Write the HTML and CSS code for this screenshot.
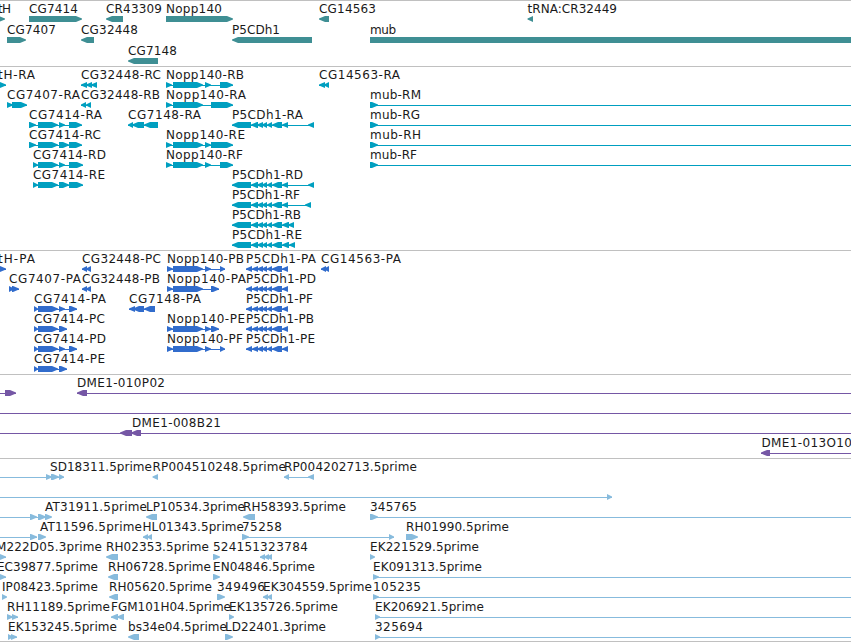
FILE: index.html
```html
<!DOCTYPE html>
<html lang="en">
<head>
  <meta charset="UTF-8" />
  <title>Genome Browser</title>
  <link rel="stylesheet" href="styles.css">
</head>
<body>
  <main class="tracks">
    <svg class="track genes" id="genes" height="65"></svg>
    <svg class="track transcripts" id="transcripts" height="183"></svg>
    <svg class="track proteins" id="proteins" height="123"></svg>
    <svg class="track bacs" id="bacs" height="83"></svg>
    <svg class="track ests" id="ests" height="182"></svg>
  </main>
  <script src="tracks.js"></script>
</body>
</html>
```
FILE: styles.css
```css
body {
  margin: 0;
  background-color: #fff;
  font-family: "DejaVu Sans", sans-serif;
  font-size: 12px;
  overflow: hidden;
}
.tracks {
  display: flex;
  flex-direction: column;
  border-bottom: 1px solid #c0c0c0;
}
.track {
  display: block;
  width: 100%;
  border-top: 1px solid #c0c0c0;
  overflow: hidden;
}
.track text {
  fill: #1a1a1a;
}
.track rect {
  shape-rendering: crispEdges;
}
.genes {
  fill: #3f8f94;
}
.transcripts {
  fill: #009fc0;
}
.proteins {
  fill: #316ccc;
}
.bacs {
  fill: #7557a5;
}
.ests {
  fill: #87bbdd;
}
```
FILE: tracks.js
```js
const END = 860;

// each item: [row, label, label start, label end, strand, exons, line end]
const nopp = [[166, 172], [173, 203]];
const noppP = [[167, 173], [173, 203]];
const p5 = [[232, 251], [251, 258], [257, 263], [262, 267], [267, 272], [272, 282]];
const p5P = [[246, 252], [252, 258], [257, 263], [262, 267], [267, 272], [272, 282], [282, 288]];

const genes = [
  [0, "tH", -2, 11, 1, [[-10, 5]]],
  [0, "CG7414", 29, 78, 1, [[29, 82]]],
  [0, "CR43309", 106, 162, -1, [[106, 123]]],
  [0, "Nopp140", 166, 222, 1, [[166, 233]]],
  [0, "CG14563", 319, 376, -1, [[319, 329]]],
  [0, "tRNA:CR32449", 527.5, 617, -1, [[527.5, 533]]],
  [1, "CG7407", 7, 56, 1, [[7, 26]]],
  [1, "CG32448", 81, 138, -1, [[81, 94]]],
  [1, "P5CDh1", 232, 280, -1, [[232, 312]]],
  [1, "mub", 370, 396, 1, [[370, END]]],
  [2, "CG7148", 128, 177, -1, [[128, 158]]]
];

const transcripts = [
  [0, "tH-RA", -2, 35, 1, [[-10, 0], [0, 6]]],
  [0, "CG32448-RC", 81, 161, -1, [[81, 87], [86, 92], [91, 97]]],
  [0, "Nopp140-RB", 166, 244, 1, [...nopp, [205, 211], [220, 233]]],
  [0, "CG14563-RA", 319, 400, -1, [[319, 325], [324, 329]]],
  [1, "CG7407-RA", 7, 80, 1, [[7, 13], [12, 27]]],
  [1, "CG32448-RB", 81, 160, -1, [[81, 86], [86, 91]]],
  [1, "Nopp140-RA", 166, 246, 1, [...nopp, [211, 233]]],
  [1, "mub-RM", 370, 421, 1, [[370, 378]], END],
  [2, "CG7414-RA", 29, 102, 1, [[29, 36], [38, 58], [59, 65], [69, 82]]],
  [2, "CG7148-RA", 128, 201, -1, [[128, 133], [132, 144], [144, 158]]],
  [2, "P5CDh1-RA", 232, 303, -1, [...p5, [282, 288], [308, 314]]],
  [2, "mub-RG", 370, 420, 1, [[370, 378]], END],
  [3, "CG7414-RC", 29, 101, 1, [[29, 36], [38, 58], [59, 69], [69, 82]]],
  [3, "Nopp140-RE", 166, 245, 1, [...nopp, [205, 211], [211, 233]]],
  [3, "mub-RH", 370, 421, 1, [[370, 378]], END],
  [4, "CG7414-RD", 33, 106, 1, [[33, 38], [38, 58], [59, 65], [69, 83]]],
  [4, "Nopp140-RF", 166, 243, 1, [...nopp, [205, 211], [220, 233]]],
  [4, "mub-RF", 370, 417, 1, [[370, 378]], END],
  [5, "CG7414-RE", 33, 105, 1, [[33, 38], [38, 58], [59, 69], [69, 83]]],
  [5, "P5CDh1-RD", 232, 303, -1, [...p5, [282, 288], [308, 314]]],
  [6, "P5CDh1-RF", 232, 300, -1, [...p5, [282, 288], [305, 311]]],
  [7, "P5CDh1-RB", 232, 301, -1, [...p5, [282, 289], [288, 294]]],
  [8, "P5CDh1-RE", 232, 302, -1, [...p5, [282, 289], [289, 295]]]
];

const proteins = [
  [0, "tH-PA", -2, 35, 1, [[-10, 0], [0, 6]]],
  [0, "CG32448-PC", 82, 161, -1, [[82, 87], [86, 91]]],
  [0, "Nopp140-PB", 167, 244, 1, [...noppP, [205, 211], [220, 225]]],
  [0, "P5CDh1-PA", 246, 316, -1, p5P],
  [0, "CG14563-PA", 321, 401, -1, [[321, 326], [324, 329]]],
  [1, "CG7407-PA", 9, 81, 1, [[9, 14], [12, 19]]],
  [1, "CG32448-PB", 82, 160, -1, [[82, 87], [86, 91]]],
  [1, "Nopp140-PA", 167, 246, 1, [...noppP, [211, 219]]],
  [1, "P5CDh1-PD", 246, 316, -1, p5P],
  [2, "CG7414-PA", 34, 106, 1, [[34, 38], [38, 58], [59, 65], [69, 77]]],
  [2, "CG7148-PA", 129, 201, -1, [[129, 135], [133, 144], [144, 155]]],
  [2, "P5CDh1-PF", 246, 313, -1, p5P],
  [3, "CG7414-PC", 34, 105, 1, [[34, 38], [38, 58], [59, 67]]],
  [3, "Nopp140-PE", 167, 245, 1, [...noppP, [205, 211], [211, 219]]],
  [3, "P5CDh1-PB", 246, 314, -1, p5P],
  [4, "CG7414-PD", 34, 106, 1, [[34, 38], [38, 58], [59, 65], [69, 77]]],
  [4, "Nopp140-PF", 167, 243, 1, [...noppP, [205, 211], [220, 225]]],
  [4, "P5CDh1-PE", 246, 315, -1, p5P],
  [5, "CG7414-PE", 34, 105, 1, [[34, 38], [38, 58], [59, 67]]]
];

const bacs = [
  [0, "", 0, 0, 1, [[-10, -5], [5, 16]]],
  [0, "DME1-010P02", 77, 165, -1, [[77, 87]], END],
  [1, "", 0, 0, -1, [[-10, -5]], END],
  [2, "", 0, 0, -1, [[-10, -5], [120, 132]]],
  [2, "DME1-008B21", 132, 221, -1, [[131, 141]], END],
  [3, "DME1-013O10", 761.5, 852, -1, [[761, 770]], END]
];

const ests = [
  [0, "", 0, 0, 1, [[-10, -5], [46, 52]]],
  [0, "SD18311.5prime", 50, 152, 1, [[51, 59], [59, 64]]],
  [0, "RP004510248.5prime", 152.5, 286, -1, [[152.5, 158]]],
  [0, "RP004202713.5prime", 284, 417, -1, [[284, 289], [308, 314]]],
  [1, "", 0, 0, 1, [[-10, -5], [607, 612]]],
  [2, "", 0, 0, 1, [[-10, -5], [30, 37], [38, 46]]],
  [2, "AT31911.5prime", 45, 147, 1, [[45, 52]]],
  [2, "LP10534.3prime", 146, 245, -1, [[146, 157]]],
  [2, "RH58393.5prime", 243, 346, -1, [[243, 255]]],
  [2, "345765", 370, 417, 1, [[370, 378]], END],
  [3, "", 0, 0, 1, [[-10, -5], [30, 37]]],
  [3, "AT11596.5prime", 40, 142, 1, [[38, 46]]],
  [3, "HL01343.5prime", 142.5, 244, -1, [[143, 148], [147, 152]]],
  [3, "75258", 242, 282, 1, [[242, 249], [389, 394]]],
  [3, "RH01990.5prime", 406, 509, 1, [[406, 418]]],
  [4, "M222D05.3prime", -4, 102, 1, [[-10, 0], [0, 6]]],
  [4, "RH02353.5prime", 106, 209, -1, [[106, 118]]],
  [4, "524151", 213, 260, 1, [[213, 220]]],
  [4, "323784", 260, 308, -1, [[260, 265], [264, 269], [267, 272]]],
  [4, "EK221529.5prime", 370, 479, 1, [[370, 375]]],
  [5, "EC39877.5prime", -3, 98, 1, [[-10, 0], [0, 6]]],
  [5, "RH06728.5prime", 108, 211, -1, [[108, 118]]],
  [5, "EN04846.5prime", 213, 315, 1, [[213, 220]]],
  [5, "EK091313.5prime", 373, 482, 1, [[373, 379]], END],
  [6, "IP08423.5prime", 2, 98, 1, [[2, 7]]],
  [6, "RH05620.5prime", 109, 212, -1, [[109, 118]]],
  [6, "349496", 217, 265, 1, [[217, 225]]],
  [6, "EK304559.5prime", 263, 372, -1, [[263, 268], [267, 272]]],
  [6, "105235", 373, 421, 1, [[373, 379]], END],
  [7, "RH11189.5prime", 7, 110, 1, [[7, 13], [12, 18]]],
  [7, "FGM101H04.5prime", 111, 231, -1, [[111, 118], [117, 124]]],
  [7, "EK135726.5prime", 229, 338, 1, [[229, 234]]],
  [7, "EK206921.5prime", 375, 484, 1, [[375, 380]], END],
  [8, "EK153245.5prime", 8, 117, 1, [[8, 13], [11, 17]]],
  [8, "bs34e04.5prime", 128, 227, -1, [[128, 139]]],
  [8, "LD22401.3prime", 225, 326, 1, [[225, 233]]],
  [8, "325694", 375, 423, 1, [[375, 380]], END]
];

// box with an arrow head on the strand side, short exons are all head
function exonPoints(x1, x2, strand, y) {
  const head = Math.min(6, x2 - x1);
  if (strand > 0) {
    return `${x1},${y} ${x2 - head},${y} ${x2},${y + 2.5} ${x2},${y + 3.5} ${x2 - head},${y + 6} ${x1},${y + 6}`;
  }
  return `${x2},${y} ${x1 + head},${y} ${x1},${y + 2.5} ${x1},${y + 3.5} ${x1 + head},${y + 6} ${x2},${y + 6}`;
}

function drawTrack(id, items, pitch) {
  let out = "";
  for (const [row, label, start, end, strand, exons, lineEnd] of items) {
    const top = row * pitch;
    const from = exons[0][0];
    const to = lineEnd || exons[exons.length - 1][1];
    if (exons.length > 1 || lineEnd) {
      out += `<rect x="${from}" y="${top + 18}" width="${to - from}" height="1"/>`;
    }
    for (const [x1, x2] of exons) {
      out += `<polygon points="${exonPoints(x1, x2, strand, top + 15)}"/>`;
    }
    if (label) {
      out += `<text x="${start}" y="${top + 12}" textLength="${end - start}">${label}</text>`;
    }
  }
  document.getElementById(id).innerHTML = out;
}

drawTrack("genes", genes, 21);
drawTrack("transcripts", transcripts, 20);
drawTrack("proteins", proteins, 20);
drawTrack("bacs", bacs, 20);
drawTrack("ests", ests, 20);
```
